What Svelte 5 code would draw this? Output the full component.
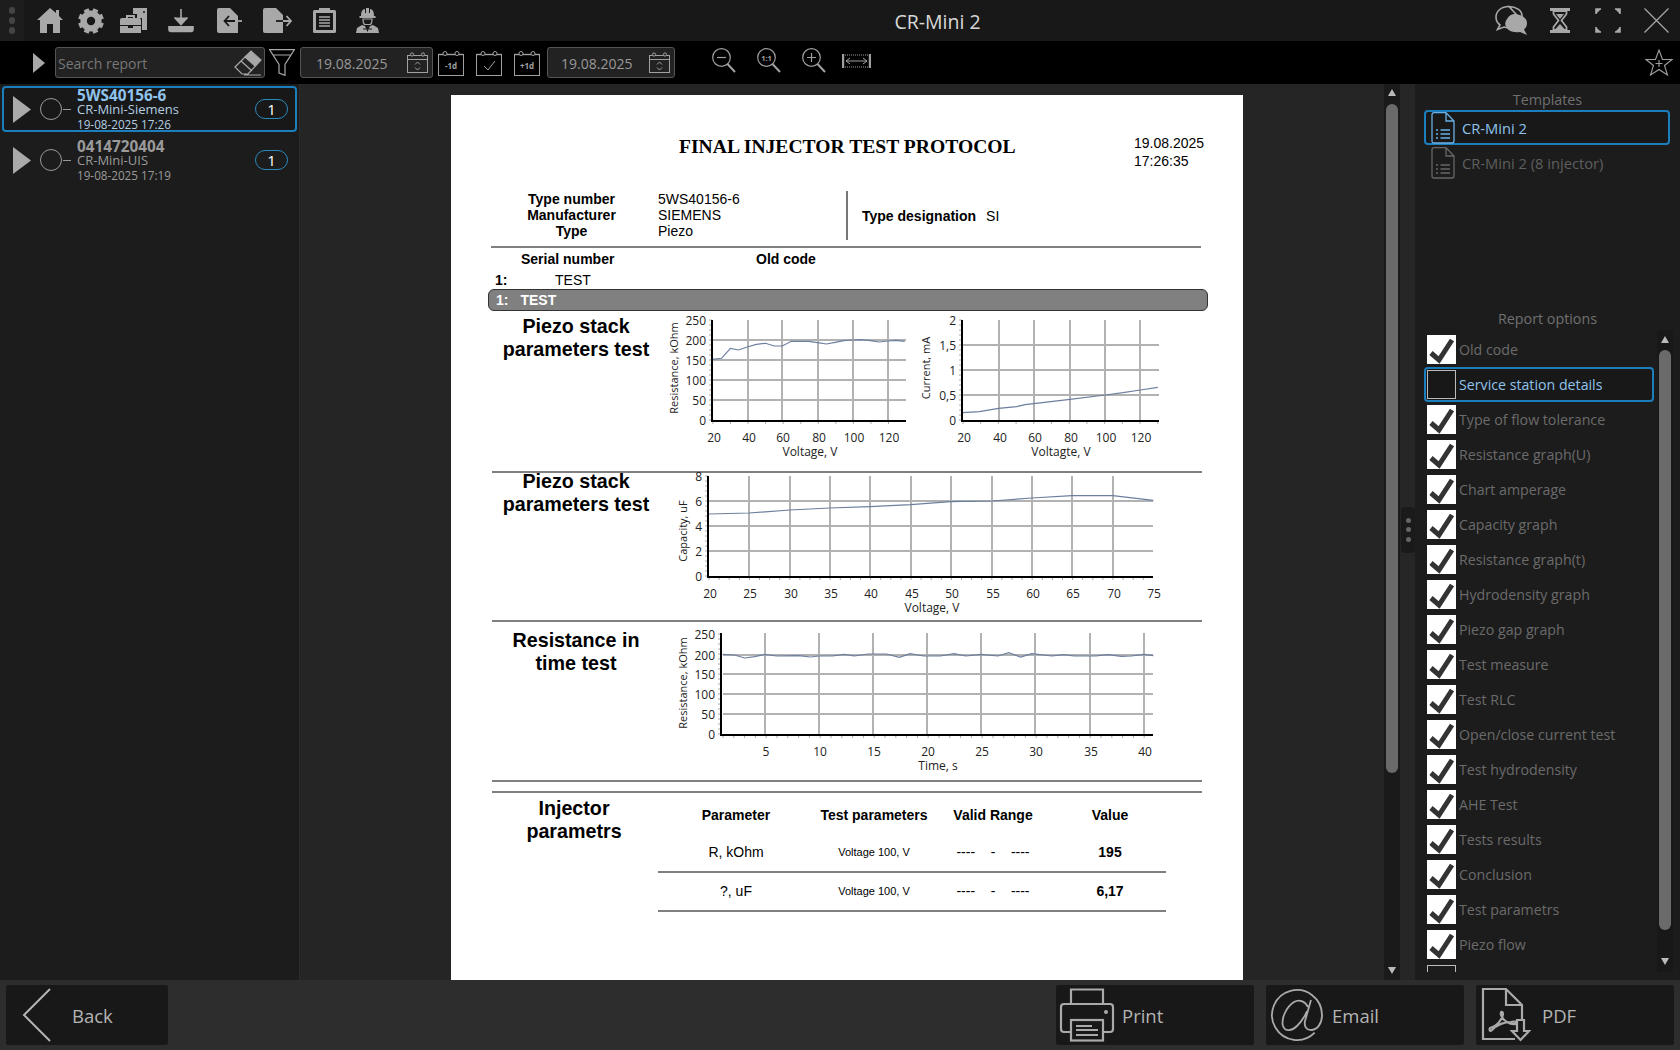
<script>
  const num = (a, b, s) => { const r = []; for (let v = a; v <= b; v += s) r.push(v); return r; };
  const zoomPts = (ox, oy, pts) => pts.map(([x, y]) => `${(ox + x / 2.96).toFixed(1)},${(oy + y / 3).toFixed(1)}`).join(' ');

  const chart1 = {
    ax: 712, top: 320, bottom: 421, right: 906, gridR: 906, gridL: 713,
    ys: [['250',320],['200',340],['150',360],['100',380],['50',400],['0',420]],
    xs: [['20',713],['40',748],['60',782],['80',818],['100',853],['120',888]],
    minorX: num(713, 905, 17.55), minorY: num(320, 420, 5),
    hGrid: [340,360,380,400], vGrid: [748,782,818,853,888],
    lx: 438, tx: 810, ty: 452, title: 'Voltage, V', yl: 'Resistance, kOhm', ylx: 674, yly: 368,
    line: zoomPts(650, 300, [[185,178],[212,175],[238,145],[262,150],[290,140],[315,133],[342,130],[368,138],[392,138],[418,124],[470,124],[496,128],[522,132],[548,127],[574,122],[600,120],[626,119],[652,122],[678,126],[704,123],[730,121],[754,124]])
  };
  const chart2 = {
    ax: 962, top: 320, bottom: 421, right: 1159, gridR: 1159, gridL: 963,
    ys: [['2',320],['1,5',345],['1',370],['0,5',395],['0',420]],
    xs: [['20',963],['40',999],['60',1034],['80',1070],['100',1105],['120',1140]],
    minorX: num(963, 1158, 17.7), minorY: num(320, 420, 5),
    hGrid: [345,370,395], vGrid: [999,1034,1070,1105,1140],
    lx: 438, tx: 1061, ty: 452, title: 'Voltagte, V', yl: 'Current, mA', ylx: 926, yly: 368,
    line: zoomPts(650, 300, [[926,338],[975,335],[1032,325],[1085,320],[1110,314],[1136,311],[1243,298],[1348,285],[1400,278],[1452,270],[1503,262]])
  };
  const chart3 = {
    ax: 708, top: 475, bottom: 576, right: 1153, gridR: 1153, gridL: 709,
    ys: [['8',475],['6',500],['4',525],['2',550],['0',575]],
    xs: [['20',709],['25',749],['30',790],['35',830],['40',870],['45',911],['50',951],['55',992],['60',1032],['65',1072],['70',1113],['75',1153]],
    minorX: num(709, 1153, 10.1), minorY: num(475, 575, 5),
    hGrid: [500,525,550], vGrid: [749,790,830,870,911,951,992,1032,1072,1113],
    lx: 593, tx: 932, ty: 607, title: 'Voltage, V', yl: 'Capacity, uF', ylx: 683, yly: 530,
    line: zoomPts(650, 460, [[174,159],[293,156],[414,147],[532,141],[651,137],[772,131],[890,122],[1012,120],[1130,111],[1249,104],[1370,104],[1490,118]])
  };
  const chart4 = {
    ax: 721, top: 633, bottom: 735, right: 1153, gridR: 1153, gridL: 723,
    ys: [['250',634],['200',655],['150',674],['100',694],['50',714],['0',734]],
    xs: [['5',765],['10',819],['15',873],['20',927],['25',981],['30',1035],['35',1090],['40',1144]],
    minorX: num(723, 1153, 10.8), minorY: num(634, 734, 5),
    hGrid: [655,674,694,714], vGrid: [765,819,873,927,981,1035,1090,1144],
    lx: 752, tx: 938, ty: 766, title: 'Time, s', yl: 'Resistance, kOhm', ylx: 683, yly: 683,
    line: zoomPts(650, 460, [[215,583],[250,585],[280,594],[310,590],[340,583],[375,588],[440,587],[475,591],[500,588],[540,588],[575,583],[605,588],[645,582],[700,582],[738,592],[770,581],[810,588],[860,588],[900,581],[935,588],[980,583],[1030,588],[1062,578],[1097,591],[1130,581],[1190,588],[1225,584],[1255,588],[1320,588],[1355,584],[1395,589],[1425,588],[1462,583],[1490,587]])
  };

  const options = ['Old code','Service station details','Type of flow tolerance','Resistance graph(U)','Chart amperage','Capacity graph','Resistance graph(t)','Hydrodensity graph','Piezo gap graph','Test measure','Test RLC','Open/close current test','Test hydrodensity','AHE Test','Tests results','Conclusion','Test parametrs','Piezo flow',''];
  const reports = [
    { id: '5WS40156-6', sub: 'CR-Mini-Siemens', date: '19-08-2025 17:26', active: true },
    { id: '0414720404', sub: 'CR-Mini-UIS', date: '19-08-2025 17:19', active: false }
  ];
  const gearTeeth = [0, 45, 90, 135];
</script>

{#snippet cal(label, kind)}
  <svg class="cal" viewBox="0 0 26 26" fill="none" stroke="#a0a0a0" stroke-width="1">
    <rect x="0.5" y="4.5" width="25" height="21" />
    <path d="M0.5 4.5H25.5" stroke-width="1.4" />
    <circle cx="7" cy="3.5" r="2" fill="#000" /><circle cx="19" cy="3.5" r="2" fill="#000" />
    {#if kind === 'check'}
      <path d="M8 16l4 4 7-9" />
    {:else}
      <text x="13" y="19" text-anchor="middle" class="caltxt">{label}</text>
    {/if}
  </svg>
{/snippet}

{#snippet smallcal()}
  <svg class="smallcal" viewBox="0 0 21 21" fill="none" stroke="#a0a0a0" stroke-width="1">
    <rect x="0.5" y="3.5" width="20" height="17" />
    <path d="M0.5 7.5H20.5" />
    <circle cx="5" cy="2.5" r="1.6" fill="#222" /><circle cx="16" cy="2.5" r="1.6" fill="#222" />
    <path d="M8 12.5l2.5-2.5 2.5 2.5M8 15.5l2.5 2.5 2.5-2.5" />
  </svg>
{/snippet}

{#snippet chart(c, vb, w, h)}
  <svg class="chart" viewBox={vb} width={w} height={h}>
    {#each c.hGrid as y}<line x1={c.gridL} x2={c.gridR} y1={y} y2={y} class="grid" />{/each}
    {#each c.vGrid as x}<line x1={x} x2={x} y1={c.top} y2={c.bottom} class="grid" />{/each}
    {#each c.minorX as x}<line x1={x} x2={x} y1={c.bottom} y2={c.bottom + 3} class="minor" />{/each}
    {#each c.minorY as y}<line x1={c.ax - 3} x2={c.ax} y1={y} y2={y} class="minor" />{/each}
    <polyline points={c.line} class="data" />
    <path d="M{c.ax} {c.top}V{c.bottom}H{c.right}" class="axis" />
    {#each c.ys as [t, y]}<text x={c.ax - 6} y={y + 5} text-anchor="end" class="tick">{t}</text>{/each}
    {#each c.xs as [t, x]}<text x={x + 1} y={c.lx + 4} text-anchor="middle" class="tick">{t}</text>{/each}
    <text x={c.tx} y={c.ty + 4} text-anchor="middle" class="tick">{c.title}</text>
    <text transform="translate({c.ylx + 4} {c.yly}) rotate(-90)" text-anchor="middle" class="tick yl">{c.yl}</text>
  </svg>
{/snippet}

{#snippet doc(color)}
  <svg class="doc" viewBox="0 0 24 32" fill="none" stroke={color} stroke-width="1.3">
    <path d="M3 .7H15L23 9V29Q23 31 21 31H3Q1 31 1 29V3Q1 .7 3 .7ZM15 .7V9H23" />
    <path d="M9.5 18H19M9.5 22H19M9.5 26H19M5 18H7M5 22H7M5 26H7" stroke-width="1.5" />
  </svg>
{/snippet}

<div class="app">
  <header class="top">
    <div class="grip"><i></i><i></i><i></i></div>
    <svg class="ti home" viewBox="0 0 26 25"><path d="M13 0L19 5V2H22V8L26 12H23V25H16V16H10V25H3V12H0Z" /></svg>
    <svg class="ti gear" viewBox="-13 -13 26 26">
      <circle r="7.6" fill="none" stroke="#a8a8a8" stroke-width="6" />
      {#each gearTeeth as a}
        <rect x="-2.6" y="-12.8" width="5.2" height="25.6" transform="rotate({a + 22.5})" class="tooth" />
      {/each}
      <circle r="4.2" fill="#181818" />
    </svg>
    <svg class="ti tbx" viewBox="0 0 28 25">
      <path d="M13 0H27V22H22V10H17V6H13Z" />
      <path d="M0 12Q0 10 2 10H6V7H15V10H19Q21 10 21 12V17H0ZM8 9V10H13V9ZM0 18H8V20H13V18H21V25H0Z" />
      <circle cx="24" cy="4" r="1" fill="#181818" />
    </svg>
    <svg class="ti dl" viewBox="0 0 26 25" fill="none" stroke="#a8a8a8" stroke-width="1.6">
      <path d="M13 1V16M6.500 9.500L13 16.500 19.500 9.500M1 18V21.500Q1 23.500 3 23.500H23Q25 23.500 25 21.500V18" />
    </svg>
    <svg class="ti imp" viewBox="0 0 25 25">
      <path d="M2 0H13L21 8V25H2Q0 25 0 23V2Q0 0 2 0Z" />
      <path d="M8 13H18M12 8L7.500 13 12 18" fill="none" stroke="#181818" stroke-width="1.8" />
      <path d="M18 13H25" stroke="#a8a8a8" stroke-width="1.8" />
    </svg>
    <svg class="ti exp" viewBox="0 0 29 25">
      <path d="M2 0H13L20 7V25H2Q0 25 0 23V2Q0 0 2 0Z" />
      <path d="M13 13H20" stroke="#181818" stroke-width="1.8" />
      <path d="M20 13H28M23.500 8L28 13 23.500 18" fill="none" stroke="#a8a8a8" stroke-width="1.8" />
    </svg>
    <svg class="ti clip" viewBox="0 0 23 25">
      <rect x="0" y="2" width="23" height="23" rx="1.500" />
      <rect x="3" y="5" width="17" height="17" fill="#181818" />
      <rect x="6" y="0" width="11" height="5" />
      <path d="M6 9H17M6 12H17M6 15H17M6 18H17" stroke="#a8a8a8" stroke-width="1.300" />
    </svg>
    <svg class="ti worker" viewBox="0 0 23 25">
      <path d="M5 8Q5 1 9 1V5H10V0H13V5H14V1Q18 1 18 8H19.500V10H3.500V8Z" />
      <path d="M7 11H16V12Q16 15 14.500 16.500H8.500Q7 15 7 12Z" fill="none" stroke="#a8a8a8" stroke-width="1.200" />
      <path d="M6 17L9 18 11.500 24 14 18 17 17 22 20 23 25H0L1 20Z" />
      <path d="M7 21H10M13 21H16" stroke="#181818" />
    </svg>
    <h1>CR-Mini 2</h1>
    <svg class="ti chat" viewBox="0 0 33 31">
      <path d="M14 1.500C6.500 1.500 1 6 1 12Q1 17 5 20L2.500 24.500 9 22Q12 23 15 22.500" fill="none" stroke="#a8a8a8" stroke-width="1.600" />
      <path d="M14 1.500C21 1.500 27 5.500 27 11Q27 13 26 14.500L14 1.500Z" fill="none" stroke="#a8a8a8" stroke-width="1.600" />
      <path d="M19 9C26 9 32 13 32 18Q32 22 29 24.500L32 30 25 27Q17 28 12.500 24 8 19 12 14 14.500 9.500 19 9Z" />
    </svg>
    <svg class="ti hour" viewBox="0 0 20 25">
      <rect width="20" height="3" /><rect y="22" width="20" height="3" />
      <path d="M3.500 3H16.500V6L11.500 12.500 16.500 19V22H3.500V19L8.500 12.500 3.500 6Z" fill="none" stroke="#a8a8a8" stroke-width="1.800" />
      <path d="M6 6H14L10 11ZM5.500 21L10 16 14.500 21Z" />
    </svg>
    <svg class="ti full" viewBox="0 0 26 25" fill="none" stroke="#a8a8a8" stroke-width="1.600">
      <path d="M1 6V1H6M20 1H25V6M25 19V24H20M6 24H1V19" />
    </svg>
    <svg class="ti close" viewBox="0 0 25 25" fill="none" stroke="#a8a8a8" stroke-width="1.200"><path d="M.500.500L24.500 24.500M24.500.500L.500 24.500" /></svg>
  </header>

  <div class="bar">
    <svg class="play" viewBox="0 0 12 20"><path d="M0 0L12 10 0 20Z" /></svg>
    <div class="search">
      <span>Search report</span>
      <svg class="eraser" viewBox="0 0 28 26" fill="none" stroke="#a8a8a8" stroke-width="1.200">
        <path d="M1 17L17 1 27 10 14 24H8ZM7 11L18 21M10 25H27" />
        <path d="M11 7L17 2 26 10 21 16Z" fill="#a8a8a8" />
      </svg>
    </div>
    <svg class="funnel" viewBox="0 0 26 27" fill="none" stroke="#a8a8a8" stroke-width="1.200">
      <path d="M.700.700H25.300L16 15.500V26.300L10 24V15.500ZM4 6H22" />
    </svg>
    <div class="date d1"><span>19.08.2025</span>{@render smallcal()}</div>
    {@render cal('-1d')}
    {@render cal('', 'check')}
    {@render cal('+1d')}
    <div class="date d2"><span>19.08.2025</span>{@render smallcal()}</div>
    <svg class="zm first" viewBox="0 0 24 25" fill="none" stroke="#a0a0a0" stroke-width="1.200">
      <circle cx="9.500" cy="9.500" r="8.800" /><path d="M15.500 16L23 24" stroke-width="2" /><path d="M5 9.500H14" />
    </svg>
    <svg class="zm one" viewBox="0 0 24 25" fill="none" stroke="#a0a0a0" stroke-width="1.200">
      <circle cx="9.500" cy="9.500" r="8.800" /><path d="M15.500 16L23 24" stroke-width="2" />
      <text x="9.500" y="12.500" text-anchor="middle" class="onetxt">1:1</text>
    </svg>
    <svg class="zm plus" viewBox="0 0 24 25" fill="none" stroke="#a0a0a0" stroke-width="1.200">
      <circle cx="9.500" cy="9.500" r="8.800" /><path d="M15.500 16L23 24" stroke-width="2" /><path d="M5 9.500H14M9.500 5V14" />
    </svg>
    <svg class="fit" viewBox="0 0 29 14" fill="none" stroke="#a0a0a0">
      <path d="M3 1H26M3 13H26" stroke-dasharray="1 1" />
      <path d="M1 0V14M28 0V14" stroke-width="2.400" />
      <path d="M4 7H25M8 4L4 7 8 10M21 4L25 7 21 10" />
    </svg>
    <svg class="star" viewBox="0 0 28 27" fill="none" stroke="#a0a0a0" stroke-width="1.100">
      <path d="M14 1L17.500 10.500 27 10.500 19.500 16.500 22.500 26 14 20.500 5.500 26 8.500 16.500 1 10.500 10.500 10.500ZM14 11V18M10.500 14.500H17.500" />
    </svg>
  </div>

  <main class="main">
    <aside class="left">
      {#each reports as r}
        <div class="rep" class:active={r.active}>
          <svg class="rplay" viewBox="0 0 18 27"><path d="M0 0L18 13.500 0 27Z" /></svg>
          <span class="ring"></span>
          <span class="dash"></span>
          <div class="rtext">
            <b>{r.id}</b>
            <span class="rsub">{r.sub}</span>
            <span class="rdate">{r.date}</span>
          </div>
          <span class="pill">1</span>
        </div>
      {/each}
    </aside>

    <section class="center">
      <article class="paper">
        <div class="head">
          <div class="ptitle">FINAL INJECTOR TEST PROTOCOL</div>
          <div class="stamp">19.08.2025<br />17:26:35</div>
        </div>
        <div class="info">
          <div class="labels"><b>Type number</b><b>Manufacturer</b><b>Type</b></div>
          <div class="vals"><span>5WS40156-6</span><span>SIEMENS</span><span>Piezo</span></div>
          <div class="desig"><b>Type designation</b><span>SI</span></div>
        </div>
        <div class="hr first"></div>
        <div class="serial"><b>Serial number</b><b>Old code</b></div>
        <div class="sval"><b>1:</b><span>TEST</span></div>
        <div class="band"><span>1:</span><span>TEST</span></div>

        <div class="sec s1">
          <h2>Piezo stack<br />parameters test</h2>
          {@render chart(chart1, '650 311 260 160', 260, 160)}
          {@render chart(chart2, '910 311 270 160', 270, 160)}
        </div>
        <div class="hr"></div>
        <div class="sec s2">
          <h2>Piezo stack<br />parameters test</h2>
          {@render chart(chart3, '650 472 530 147', 530, 147)}
        </div>
        <div class="hr"></div>
        <div class="sec s3">
          <h2>Resistance in<br />time test</h2>
          {@render chart(chart4, '650 622 530 158', 530, 158)}
        </div>
        <div class="hr"></div>
        <div class="hr second"></div>
        <div class="params">
          <h2>Injector<br />parametrs</h2>
          <div class="ptable">
            <div class="prow phead"><b>Parameter</b><b>Test parameters</b><b>Valid Range</b><b>Value</b></div>
            <div class="prow pline"><span>R, kOhm</span><small>Voltage 100, V</small><span class="rng">----&nbsp;&nbsp;&nbsp;&nbsp;-&nbsp;&nbsp;&nbsp;&nbsp;----</span><b>195</b></div>
            <div class="prow pline"><span>?, uF</span><small>Voltage 100, V</small><span class="rng">----&nbsp;&nbsp;&nbsp;&nbsp;-&nbsp;&nbsp;&nbsp;&nbsp;----</span><b>6,17</b></div>
          </div>
        </div>
      </article>
    </section>

    <div class="vscroll">
      <span class="up"></span>
      <span class="thumb"></span>
      <span class="down"></span>
    </div>
    <div class="split"><div class="handle"><i></i><i></i><i></i></div></div>

    <aside class="right">
      <div class="tpl">
        <div class="cap">Templates</div>
        <div class="tplrow sel">{@render doc('#6ab0e4')}<span>CR-Mini 2</span></div>
        <div class="tplrow">{@render doc('#666')}<span>CR-Mini 2 (8 injector)</span></div>
      </div>
      <div class="opts">
        <div class="cap">Report options</div>
        <div class="optwrap">
          <div class="optlist">
            {#each options as o, i}
              <div class="opt" class:focus={i === 1}>
                {#if i === 1 || i === 18}
                  <span class="box empty"></span>
                {:else}
                  <span class="box">
                    <svg viewBox="0 0 29 29" fill="none" stroke="#333" stroke-width="5"><path d="M4 18L12 25 25 5" /></svg>
                  </span>
                {/if}
                <span class="otxt">{o}</span>
              </div>
            {/each}
          </div>
          <div class="oscroll"><span class="up"></span><span class="othumb"></span><span class="down"></span></div>
        </div>
      </div>
    </aside>
  </main>

  <footer class="foot">
    <button class="btn back">
      <svg viewBox="0 0 30 54" fill="none" stroke="#b4b4b4" stroke-width="2"><path d="M28 1L2 27 28 53" /></svg>
      <span>Back</span>
    </button>
    <button class="btn print">
      <svg viewBox="0 0 56 54" fill="none" stroke="#aaa" stroke-width="2.200">
        <path d="M12 15V1.500H44V15M12 44H5Q2 44 2 41V19Q2 16 5 16H51Q54 16 54 19V41Q54 44 51 44H44" />
        <rect x="12" y="32" width="32" height="20.500" />
        <path d="M17 38H33M17 42H39M17 47H39" />
        <circle cx="47" cy="24" r="2" fill="#aaa" stroke="none" />
      </svg>
      <span>Print</span>
    </button>
    <button class="btn email">
      <svg viewBox="0 0 54 54" fill="none" stroke="#aaa" stroke-width="1.800">
        <path d="M44.700 44.700A25 25 0 1 1 52 27C52 36 47 42 41 42 36 42 34 38 35 33L41 12M38 19C35 13 29 11 24 14 16 19 11 31 13 38 15 44 22 43 27 38 32 33 35 28 37 23" />
      </svg>
      <span>Email</span>
    </button>
    <button class="btn pdf">
      <svg viewBox="0 0 50 56" fill="none" stroke="#aaa" stroke-width="2.200">
        <path d="M34 52H2V2H25L41 18V32M25 2V18H41" />
        <path d="M9 41C15 40 21 33 22 27 22 24 19 24 20 28 22 34 29 38 35 37 37 35 34 34 30 35 23 35 15 38 11 43 9 45 8 43 9 41Z" stroke-width="2.200" />
        <path d="M36 33H43V44H48L39.500 53 31 44H36Z" />
      </svg>
      <span>PDF</span>
    </button>
  </footer>
</div>

<style>
  :global(body) { margin: 0; background: #000; }
  .app {
    width: 1680px; height: 1050px; overflow: hidden;
    display: grid; grid-template-rows: 41px 43px 896px 70px;
    font-family: "Open Sans", "Noto Sans", sans-serif;
  }
  svg { display: block; flex: none; }

  .top { display: flex; align-items: center; background: #181818; position: relative; }
  .grip { width: 24px; height: 41px; background: #1d1d1d; display: flex; flex-direction: column; align-items: center; justify-content: center; gap: 3.500px; }
  .grip i { width: 6.500px; height: 6.500px; border-radius: 50%; background: #444; }
  .ti { fill: #a8a8a8; height: 25px; }
  .home { width: 26px; margin-left: 13px; }
  .gear { width: 26px; height: 26px; margin-left: 15px; }
  .tooth { fill: #a8a8a8; }
  .tbx { width: 28px; margin-left: 16px; }
  .dl { width: 26px; margin-left: 20px; }
  .imp { width: 25px; margin-left: 23px; }
  .exp { width: 29px; margin-left: 21px; }
  .clip { width: 23px; margin-left: 21px; }
  .worker { width: 23px; margin-left: 20px; }
  h1 { position: absolute; left: 0; right: 0; top: 7px; margin: 0 0 0 195px; padding: 0; text-align: center; font-size: 19.500px; line-height: 30px; font-weight: 400; color: #d8d8d8; pointer-events: none; }
  .chat { width: 33px; height: 31px; margin-left: auto; }
  .hour { width: 20px; margin-left: 22px; }
  .full { width: 26px; margin-left: 25px; }
  .close { width: 25px; margin-left: 23px; margin-right: 11px; }

  .bar { display: flex; align-items: center; background: #000; }
  .play { width: 12px; height: 20px; fill: #a8a8a8; margin-left: 33px; }
  .search { height: 29px; margin-left: 10px; border: 1px solid #555; border-radius: 3px; background: #222; display: flex; align-items: center; justify-content: space-between; color: #777; font-size: 14px; padding-left: 2px; box-sizing: content-box; width: 206px; }
  .search span { padding-top: 1px; }
  .eraser { width: 28px; height: 26px; margin-right: 2px; }
  .funnel { width: 26px; height: 27px; margin-left: 4px; }
  .date { height: 29px; border: 1px solid #555; border-radius: 3px; background: #222; display: flex; align-items: center; justify-content: space-between; color: #999; font-size: 14px; }
  .date span { margin-left: 15px; padding-top: 1px; }
  .d1 { width: 131px; margin-left: 5px; }
  .d2 { width: 126px; margin-left: 7px; }
  .d2 span { margin-left: 13px; }
  .smallcal { width: 21px; height: 21px; margin-right: 4px; }
  .cal { width: 26px; height: 26px; margin-left: 12px; }
  .d1 + .cal { margin-left: 5px; }
  .caltxt { font: 700 8px "Open Sans", sans-serif; fill: #a0a0a0; stroke: none; }
  .zm { width: 24px; height: 25px; margin-top: -5px; }
  .zm.first { margin-left: 37px; }
  .zm.one { margin-left: 21px; }
  .zm.plus { margin-left: 21px; }
  .onetxt { font: 700 7.500px "Open Sans", sans-serif; fill: #a0a0a0; stroke: none; }
  .fit { width: 29px; height: 14px; margin-left: 16px; margin-top: -3px; }
  .star { width: 28px; height: 27px; margin-left: auto; margin-right: 7px; }

  .main { display: flex; min-height: 0; background: #252525; }
  .left { flex: none; background: #1c1c1c; border-right: 1px solid #2c2c2c; padding: 2px 2px 0; box-sizing: content-box; width: 295px; display: flex; flex-direction: column; gap: 5px; }
  .rep { height: 46px; display: flex; align-items: center; position: relative; box-sizing: border-box; border: 2px solid transparent; border-radius: 4px; }
  .rep.active { border-color: #1b7ebd; background: #181818; }
  .rplay { width: 18px; height: 27px; fill: #aaa; margin-left: 9px; flex: none; }
  .ring { width: 20px; height: 20px; border: 1.500px solid #999; border-radius: 50%; margin-left: 9px; flex: none; box-sizing: content-box; }
  .dash { width: 8px; height: 1px; background: #999; margin-left: 1px; flex: none; }
  .rtext { display: flex; flex-direction: column; margin-left: 6px; padding-top: 1px; color: #9a9a9a; flex: 1; white-space: nowrap; }
  .rtext b { font-size: 15.300px; line-height: 14px; }
  .rsub { font-size: 13px; line-height: 14.500px; }
  .rdate { font-size: 11.700px; line-height: 14px; }
  .active .rtext b { color: #8fc3ec; }
  .active .rtext span { color: #b4cfe2; }
  .pill { width: 31px; height: 18px; border: 1.500px solid #2a8abc; border-radius: 11px; color: #fff; font-size: 15px; line-height: 18px; text-align: center; margin-right: 7px; flex: none; }

  .center { width: 1084px; flex: none; overflow: hidden; padding-left: 151px; box-sizing: border-box; padding-top: 11px; }
  .paper { width: 792px; height: 885px; background: #fff; color: #000; font-family: "Liberation Sans", Arial, sans-serif; font-size: 14px; overflow: hidden; }
  .head { height: 96px; display: grid; grid-template-columns: 228px 336px 119px 1fr; box-sizing: border-box; padding-top: 40px; }
  .ptitle { grid-column: 2; font: 700 19.600px/23px "Liberation Serif", serif; white-space: nowrap; text-align: center; }
  .stamp { grid-column: 4; line-height: 18px; margin-top: -1px; }
  .info { height: 50px; display: grid; grid-template-columns: 207px 188px 1fr; align-items: start; }
  .labels { width: 121px; padding-left: 60px; display: flex; flex-direction: column; align-items: center; line-height: 15.800px; padding-top: 1px; white-space: nowrap; }
  .vals { display: flex; flex-direction: column; line-height: 15.800px; padding-top: 1px; }
  .desig { height: 49px; border-left: 2px solid #777; display: flex; align-items: center; gap: 10px; padding-left: 14px; box-sizing: border-box; padding-top: 1px; }
  .hr { height: 2px; background: #808080; margin-left: 41px; width: 710px; flex: none; }
  .hr.first { margin-top: 5px; margin-left: 40px; }
  .hr.second { margin-top: 9px; }
  .serial { display: grid; grid-template-columns: 235px auto; align-items: center; padding-left: 70px; line-height: 20px; height: 22px; }
  .sval { height: 19px; display: grid; grid-template-columns: 60px auto; padding-left: 44px; align-items: center; }
  .band { margin-left: 37px; width: 720px; height: 22px; box-sizing: border-box; border: 1px solid #333; border-radius: 6px; background: #808080; color: #fff; font-weight: 700; display: flex; align-items: center; gap: 12px; padding-left: 7px; }
  .sec { display: flex; }
  h2 { margin: 0; width: 148px; margin-left: 51px; flex: none; font-size: 19.700px; line-height: 23px; font-weight: 700; text-align: center; white-space: nowrap; }
  .s1 { height: 160px; }
  .s1 h2 { margin-top: 4px; }
  .s2 { height: 147px; }
  .s2 h2 { margin-top: -3px; }
  .s3 { height: 158px; }
  .s3 h2 { margin-top: 7px; }
  .chart { overflow: visible; }
  .grid { stroke: #b2b2b2; stroke-width: 2; }
  .minor { stroke: #aaa; stroke-width: 1; }
  .axis { fill: none; stroke: #000; stroke-width: 2; }
  .data { fill: none; stroke: #6c7f9e; stroke-width: 1.200; }
  .tick { font: 12px "Open Sans", sans-serif; fill: #222; }
  .yl { font-size: 11px; }

  .params { display: flex; }
  .params h2 { margin-left: 49px; margin-top: 4px; }
  .ptable { margin-left: 10px; width: 508px; padding-top: 11px; }
  .prow { display: grid; grid-template-columns: 156px 120px 118px 116px; text-align: center; align-items: center; border-bottom: 2px solid #808080; box-sizing: content-box; }
  .prow > * { display: block; }
  .phead { border: 0; height: 21px; margin-bottom: 9px; }
  .pline { height: 36px; padding-bottom: 1px; }
  small { font-size: 11px; }
  .rng { font-size: 14px; }

  .vscroll { width: 16px; flex: none; background: #1a1a1a; border-radius: 0 0 3px 3px; display: flex; flex-direction: column; align-items: center; position: relative; }
  .up, .down { width: 0; height: 0; border-left: 4px solid transparent; border-right: 4px solid transparent; flex: none; }
  .up { border-bottom: 7px solid #bbb; margin-top: 5px; }
  .down { border-top: 7px solid #bbb; margin-top: auto; margin-bottom: 6px; }
  .thumb { width: 12px; height: 669px; margin-top: 8px; background: #6a6a6a; border-radius: 6px; }
  .split { width: 15px; flex: none; background: #262626; display: flex; align-items: center; position: relative; }
  .handle { width: 15px; height: 46px; background: #1a1a1a; border-radius: 4px; margin-top: -5px; display: flex; flex-direction: column; align-items: center; justify-content: center; gap: 4.500px; margin-left: 1px; }
  .handle i { width: 5px; height: 5px; background: #666; border-radius: 50%; }

  .right { width: 265px; flex: none; display: flex; flex-direction: column; background: #1c1c1c; }
  .tpl { height: 225px; box-sizing: border-box; padding-top: 6px; }
  .cap { text-align: center; color: #707070; font-size: 14.300px; line-height: 20px; }
  .tplrow { height: 35px; width: 246px; margin-left: 9px; box-sizing: border-box; border: 2px solid transparent; border-radius: 4px; display: flex; align-items: center; color: #5f5f5f; font-size: 14.700px; }
  .tplrow.sel { border-color: #1b7ebd; color: #8fc3ec; background: #181818; }
  .tplrow .doc { width: 24px; height: 32px; margin-left: 5px; margin-right: 7px; }
  .opts { flex: 1; min-height: 0; }
  .optwrap { display: flex; height: 642px; margin-top: 1px; }
  .optlist { margin-left: 9px; width: 232px; height: 642px; overflow: hidden; padding-top: 2px; box-sizing: border-box; }
  .opt { height: 35px; display: flex; align-items: center; font-size: 14.200px; color: #6b6b6b; box-sizing: border-box; border: 2px solid transparent; border-radius: 4px; white-space: nowrap; }
  .opt.focus { border-color: #1b7ebd; color: #8fc3ec; width: 230px; background: #181818; }
  .box { width: 29px; height: 29px; background: #fff; flex: none; margin-left: 1px; display: block; box-sizing: border-box; }
  .box svg { width: 29px; height: 29px; }
  .box.empty { background: transparent; border: 1px solid #bbb; }
  .otxt { margin-left: 3px; }
  .oscroll { width: 16px; flex: none; margin-left: 1px; display: flex; flex-direction: column; align-items: center; background: #181818; }
  .oscroll .up { margin-top: 6px; }
  .othumb { width: 12px; height: 580px; margin-top: 7px; background: #6a6a6a; border-radius: 6px; }
  .oscroll .down { margin-bottom: 7px; }

  .foot { background: #2d2d2d; display: flex; align-items: center; padding-left: 6px; }
  .btn { height: 60px; width: 198px; border: 0; padding: 0; background: #181818; display: flex; align-items: center; color: #b4b4b4; font: 400 18.500px "Open Sans", sans-serif; border-radius: 2px; }
  .back { width: 162px; }
  .back svg { width: 30px; height: 54px; margin-left: 16px; }
  .back span { margin-left: 20px; }
  .print { margin-left: auto; }
  .print svg { width: 56px; height: 54px; margin-left: 3px; }
  .print span { margin-left: 7px; }
  .email { margin-left: 12px; }
  .email svg { width: 54px; height: 54px; margin-left: 4px; }
  .email span { margin-left: 8px; }
  .pdf { margin-left: 12px; margin-right: 6px; }
  .pdf svg { width: 50px; height: 56px; margin-left: 5px; }
  .pdf span { margin-left: 11px; }
</style>
